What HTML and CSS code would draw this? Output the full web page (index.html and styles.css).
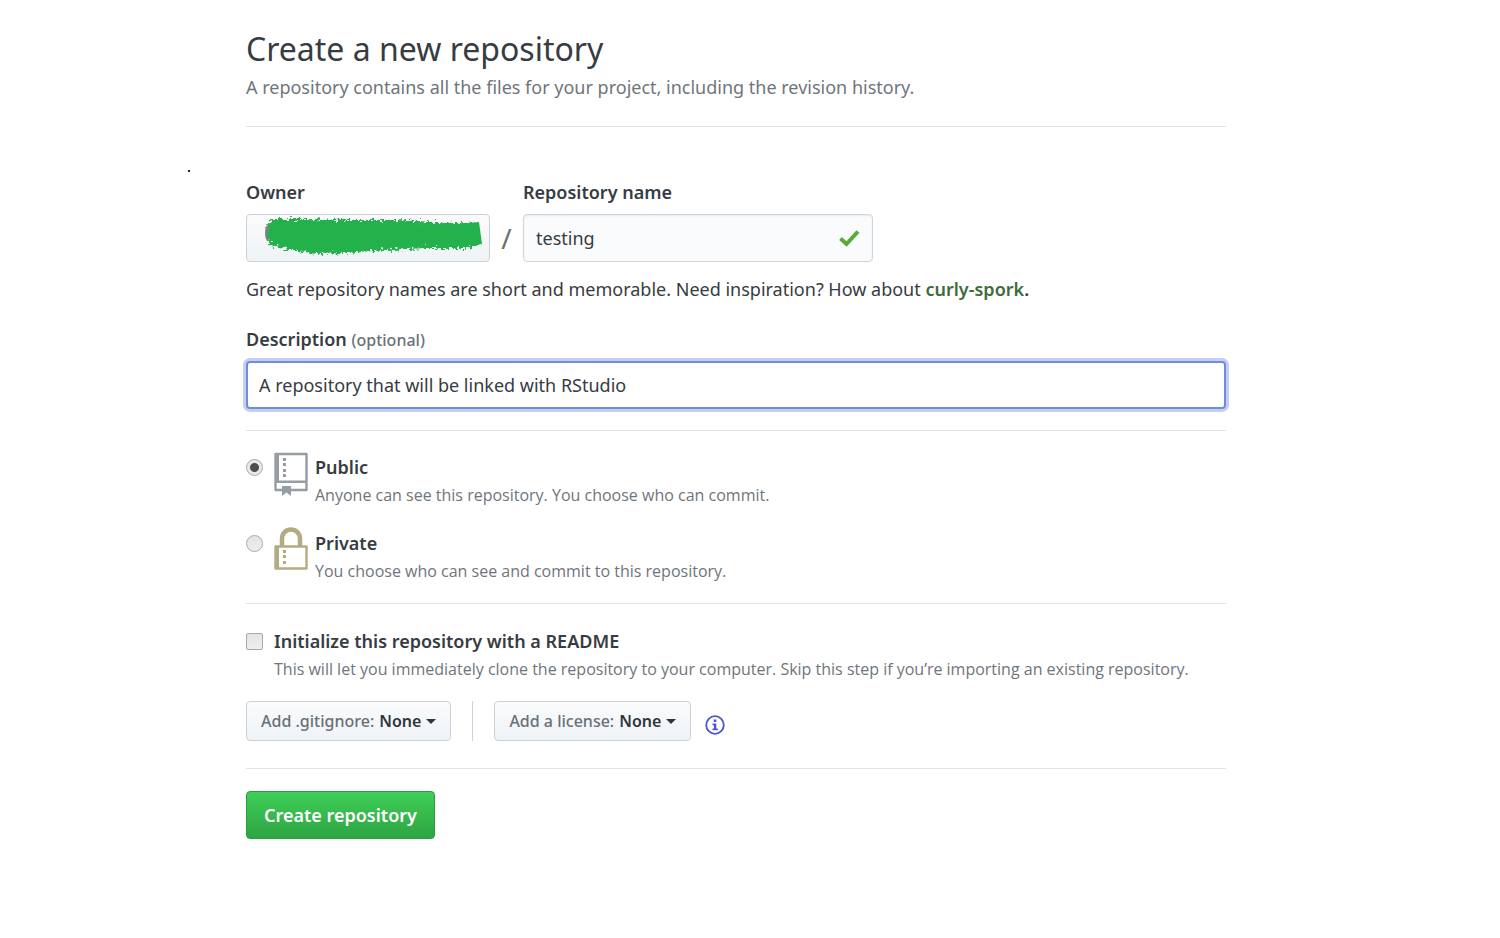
FILE: index.html
```html
<!DOCTYPE html>
<html lang="en">
<head>
<meta charset="utf-8">
<title>Create a new repository</title>
<link rel="stylesheet" href="styles.css">
</head>
<body>
<span class="speck"></span>
<main class="page">
  <header class="page-header">
    <h1 class="title">Create a new repository</h1>
    <p class="subtitle">A repository contains all the files for your project, including the revision history.</p>
  </header>
  <form class="form">
    <div class="name-row">
      <div class="field owner-field">
        <label class="label" for="owner">Owner</label>
        <button class="owner" id="owner" type="button" aria-label="Owner">
          <svg class="scribble" viewBox="0 0 242 46" aria-hidden="true">
            <defs>
              <filter id="rough" x="-5%" y="-20%" width="110%" height="140%">
                <feTurbulence type="fractalNoise" baseFrequency="0.35" numOctaves="2" seed="4" result="n"/>
                <feDisplacementMap in="SourceGraphic" in2="n" scale="10" xChannelSelector="R" yChannelSelector="G"/>
              </filter>
            </defs>
            <ellipse cx="21" cy="18" rx="3" ry="8" fill="#8a7f86"/>
            <path filter="url(#rough)" fill="#22b14c" d="M24 4L60 4L100 5L150 5L190 7L231 9L233 29L220 33L180 33L140 35L100 38L70 39L45 35L24 30L20 22L21 10Z"/>
            <path fill="#22b14c" d="M210 9L232 7L235 29L210 31Z"/>
          </svg>
        </button>
      </div>
      <span class="slash">/</span>
      <div class="field repo-field">
        <label class="label" for="repo">Repository name</label>
        <div class="repo-box">
          <input class="input" id="repo" type="text" value="testing">
          <svg class="check" viewBox="0 0 22 18" aria-hidden="true"><path d="M2.500 9.500L8.500 15L20 2.500" fill="none" stroke="#55ab35" stroke-width="4"/></svg>
        </div>
      </div>
    </div>
    <p class="hint">Great repository names are short and memorable. Need inspiration? How about <strong class="suggestion">curly-spork</strong><strong>.</strong></p>
    <div class="field description">
      <label class="label" for="desc">Description <span class="optional">(optional)</span></label>
      <input class="input focused" id="desc" type="text" value="A repository that will be linked with RStudio">
    </div>
    <div class="section visibility">
      <div class="choice">
        <input class="radio" type="radio" name="visibility" id="public" checked>
        <svg class="kind" viewBox="0 0 34 46" aria-hidden="true">
          <path d="M1.500 3H32.500V39H1.500Z" fill="none" stroke="#959da5" stroke-width="2.400" stroke-linejoin="round"/>
          <path d="M1 3H5V31H1ZM1 29.500H33V32H1Z" fill="#959da5"/>
          <path d="M9 7h3v3H9zM9 12h3v3H9zM9 18h3v3H9zM9 23h3v3H9z" fill="#959da5"/>
          <path d="M8 35H17V45L12.500 41.500L8 45Z" fill="#959da5"/>
        </svg>
        <div>
          <label class="label" for="public">Public</label>
          <p class="note">Anyone can see this repository. You choose who can commit.</p>
        </div>
      </div>
      <div class="choice">
        <input class="radio" type="radio" name="visibility" id="private">
        <svg class="kind" viewBox="0 0 34 46" aria-hidden="true">
          <path d="M8 20V11.500A9 9 0 0 1 26 11.500V20" fill="none" stroke="#b4ab83" stroke-width="4.500"/>
          <path d="M1.500 19.500H32.500V41.500H1.500Z" fill="none" stroke="#b4ab83" stroke-width="2.400" stroke-linejoin="round"/>
          <path d="M1 19H5V42H1ZM9 23h3v3H9zM9 28h3v3H9zM9 34h3v3H9z" fill="#b4ab83"/>
        </svg>
        <div>
          <label class="label" for="private">Private</label>
          <p class="note">You choose who can see and commit to this repository.</p>
        </div>
      </div>
    </div>
    <div class="section setup">
      <div class="readme">
        <input class="checkbox" type="checkbox" id="readme">
        <div>
          <label class="label" for="readme">Initialize this repository with a README</label>
          <p class="note">This will let you immediately clone the repository to your computer. Skip this step if you’re importing an existing repository.</p>
        </div>
      </div>
      <div class="menus">
        <button class="menu" type="button">Add .gitignore: <span class="value">None</span><i class="caret"></i></button>
        <span class="divider"></span>
        <button class="menu" type="button">Add a license: <span class="value">None</span><i class="caret"></i></button>
        <a class="info" href="#licenses" aria-label="About licenses">
          <svg viewBox="0 0 20 20" aria-hidden="true"><circle cx="10" cy="10" r="8.800" fill="none" stroke="#4a55cf" stroke-width="1.800"/><path d="M8.700 4.500h2.600v2.600H8.700zM7.500 8.500h3.800v5h1.500v1.700H7.500v-1.700h1.400v-3.300H7.500z" fill="#4a55cf"/></svg>
        </a>
      </div>
    </div>
    <div class="section submit">
      <button class="create" type="submit">Create repository</button>
    </div>
  </form>
</main>
</body>
</html>
```
FILE: styles.css
```css
* { box-sizing: border-box; }
body {
  margin: 0;
  padding: 28px 28px 28px 0;
  background: #fff;
  color: #373c42;
  font: 18px/28px "Noto Sans", "Open Sans", sans-serif;
}
h1, p { margin: 0; }
input, button { font: inherit; color: inherit; margin: 0; }
.page { max-width: 980px; margin: 0 auto; }
.speck { position: absolute; left: 188px; top: 170px; width: 2px; height: 2px; background: #222; }
.page-header { padding-bottom: 25px; border-bottom: 1px solid #e1e4e8; }
.title { font-size: 32px; line-height: 42px; font-weight: 400; margin-bottom: 3px; }
.subtitle { color: #6f757c; }
.form { padding-top: 51px; }
.label { display: block; font-weight: 600; }
.field .label { margin-bottom: 8px; }
.name-row { display: flex; align-items: flex-end; }
.owner-field { width: 244px; }
.repo-field { width: 350px; }
.owner {
  display: block; width: 100%; height: 48px; padding: 0;
  border: 1px solid #cdd1d5; border-radius: 4px;
  background: linear-gradient(#fafbfc, #eff3f6);
}
.scribble { display: block; width: 100%; height: 46px; }
.slash { width: 33px; text-align: center; font-size: 28px; line-height: 48px; color: #6a7077; }
.repo-box { position: relative; }
.input {
  display: block; width: 100%; height: 48px; padding: 0 12px;
  border: 1px solid #d1d5da; border-radius: 4px; background: #fafbfc;
  box-shadow: inset 0 1px 2px rgba(27, 31, 35, .08); outline: none;
}
.check { position: absolute; right: 13px; top: 15px; width: 22px; height: 18px; }
.focused { border: 2px solid #6f8ddb; background: #fff; padding: 0 11px; box-shadow: 0 0 0 3px #c3cff2; }
.hint { margin-top: 13px; }
.hint strong { font-weight: 600; }
.hint .suggestion { color: #3f6b3a; }
.description { display: flex; flex-direction: column; margin-top: 22px; }
.optional { font-size: 16px; line-height: 24px; font-weight: 500; color: #6a7077; }
.section { border-top: 1px solid #e1e4e8; margin-top: 21px; }
.visibility { display: flex; flex-direction: column; gap: 20px; padding-top: 22px; }
.choice { display: flex; align-items: flex-start; }
.radio, .checkbox {
  appearance: none; flex: none; width: 17px; height: 17px; margin-top: 6px;
  border: 1px solid #a9a9a9; background: linear-gradient(#e4e4e4, #eee);
}
.radio { border-radius: 50%; }
.radio:checked { background: radial-gradient(circle, #4d4d4d 0 4px, #e8e8e8 5px); }
.checkbox { border-radius: 2px; }
.kind { flex: none; width: 34px; height: 46px; margin: -2px 7px -2px 11px; }
.note { font-family: "Open Sans", "Noto Sans", sans-serif; font-size: 16px; color: #6f757c; }
.setup { margin-top: 18px; padding-top: 23px; }
.readme { display: flex; gap: 11px; }
.menus { display: flex; align-items: center; margin-top: 18px; }
.menu {
  display: flex; align-items: center; gap: 5px; height: 40px; padding: 0 14px;
  border: 1px solid #cdd1d5; border-radius: 4px; background: linear-gradient(#fafbfc, #eff3f6);
  font-size: 16px; font-weight: 500; color: #6a7077;
}
.value { font-weight: 600; color: #30363c; }
.caret { border: 5px solid transparent; border-top-color: #30363c; border-bottom: 0; }
.divider { width: 1px; height: 40px; margin: 0 21px; background: #cdd1d5; }
.info { width: 20px; height: 20px; margin: 8px 0 0 14px; }
.info svg { display: block; }
.submit { margin-top: 27px; padding-top: 22px; }
.create {
  height: 48px; padding: 0 17px; border: 1px solid #2b9a41; border-radius: 4px;
  background: linear-gradient(#3fcf57, #2ea443); color: #fff; font-weight: 600;
}
```
